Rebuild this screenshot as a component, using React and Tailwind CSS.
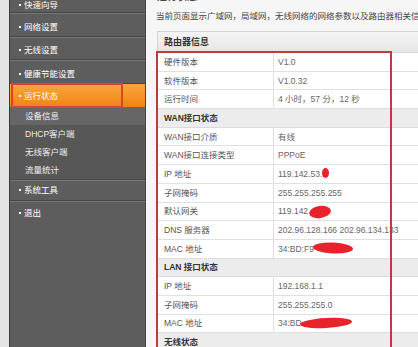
import React from "react";

const mainTop = ["快速向导", "网络设置", "无线设置", "健康节能设置"];
const subItems = ["设备信息", "DHCP客户端", "无线客户端", "流量统计"];

const rows = [
  { label: "硬件版本", value: "V1.0" },
  { label: "软件版本", value: "V1.0.32" },
  { label: "运行时间", value: "4 小时，57 分，12 秒" },
  { section: "WAN接口状态" },
  { label: "WAN接口介质", value: "有线" },
  { label: "WAN接口连接类型", value: "PPPoE" },
  { label: "IP 地址", value: "119.142.53." },
  { label: "子网掩码", value: "255.255.255.255" },
  { label: "默认网关", value: "119.142" },
  { label: "DNS 服务器", value: "202.96.128.166 202.96.134.133" },
  { label: "MAC 地址", value: "34:BD:F9" },
  { section: "LAN 接口状态" },
  { label: "IP 地址", value: "192.168.1.1" },
  { label: "子网掩码", value: "255.255.255.0" },
  { label: "MAC 地址", value: "34:BD" },
  { section: "无线状态" },
];

function Bullet() {
  return <span className="mr-[3px] inline-block h-[2px] w-[2px] shrink-0 bg-white" />;
}

export default function App() {
  return (
    <div className="relative flex h-[347px] w-[418px] overflow-hidden bg-white font-['Liberation_Sans','Noto_Sans_CJK_SC',sans-serif]">
      {/* left gutter */}
      <div className="w-[10px] shrink-0 border-r border-[#3c3c3c] bg-[#e4e4e4]" />

      {/* sidebar */}
      <div className="w-[136px] shrink-0 border-r border-[#444] bg-[#5d5d5d] text-[8.5px] leading-[12px] text-white">
        <div className="-mt-[10.5px]">
          {mainTop.map((l, i) => (
            <div
              key={l}
              className={`flex h-[23.5px] items-center border-b border-[#474747] pl-[9px] shadow-[inset_0_1px_0_#777] ${
                i === 0 ? "pt-[9px]" : "pt-[5px]"
              }`}
            >
              <Bullet />
              <span>{l}</span>
            </div>
          ))}
          <div className="flex h-[23.5px] items-center bg-gradient-to-b from-[#f9a640] via-[#f59526] to-[#ec8517] pl-[9px] pt-[2px]">
            <Bullet />
            <span>运行状态</span>
          </div>
          <div className="border-b border-[#474747] bg-[#575757] text-[#eeeeee]">
            {subItems.map((l, i) => (
              <div
                key={l}
                className={`flex h-[18px] items-center pl-[15px] ${i === 0 ? "bg-[#666666]" : ""}`}
              >
                {l}
              </div>
            ))}
          </div>
          <div className="flex h-[21px] items-center border-b border-[#474747] pl-[9px] shadow-[inset_0_1px_0_#777]">
            <Bullet />
            <span>系统工具</span>
          </div>
          <div className="flex h-[23px] items-center pl-[9px] shadow-[inset_0_1px_0_#777]">
            <Bullet />
            <span>退出</span>
          </div>
        </div>
      </div>

      {/* content */}
      <div className="min-w-0 flex-1 bg-[#f6f6f6] pl-[11px]">
        <div className="-mt-[10px] h-[14px] whitespace-nowrap text-[10px] font-bold leading-[14px] text-[#444]">
          运行状态
        </div>
        <div className="-ml-[1px] mt-[5px] h-[14px] whitespace-nowrap text-[8.5px] leading-[14px] text-[#444]">
          当前页面显示广域网，局域网，无线网络的网络参数以及路由器相关信息
        </div>
        <div className="mt-[8px] w-[300px] border-l border-t border-[#d2d2d2] bg-white text-[8.5px] leading-[12px]">
          <div className="flex h-[21px] items-center border-b border-[#d6d6d6] bg-gradient-to-b from-[#f5f5f5] to-[#e6e6e6] pl-[6px] text-[9px] font-bold text-[#333]">
            路由器信息
          </div>
          {rows.map((r, i) =>
            r.section ? (
              <div
                key={i}
                className="flex h-[18.7px] items-center border-b border-[#dcdcdc] bg-[#ececec] pl-[6px] font-bold text-[#333]"
              >
                {r.section}
              </div>
            ) : (
              <div key={i} className="flex h-[18.7px] border-b border-[#e0e0e0]">
                <div className="flex w-[116px] shrink-0 items-center border-r border-[#e0e0e0] pl-[6px] text-[#555]">
                  {r.label}
                </div>
                <div className="flex items-center whitespace-nowrap pl-[4px] text-[#666]">{r.value}</div>
              </div>
            )
          )}
        </div>
      </div>

      {/* annotation: red box around active menu item */}
      <div className="pointer-events-none absolute left-[11px] top-[83px] h-[25px] w-[112px] border-2 border-[#e0402c]" />
      {/* annotation: red box around table */}
      <div className="pointer-events-none absolute left-[156px] top-[51px] h-[320px] w-[236px] border-2 border-[#c03a3c]" />

      {/* red scribbles */}
      <svg className="pointer-events-none absolute left-0 top-0" width="418" height="347" viewBox="0 0 418 347">
        <g fill="#e8232b">
          <ellipse cx="325.5" cy="173" rx="3.5" ry="5" />
          <ellipse cx="320" cy="212" rx="11" ry="6" transform="rotate(-8 320 212)" />
          <ellipse cx="333" cy="248" rx="20" ry="5.5" transform="rotate(3 333 248)" />
          <ellipse cx="326" cy="323" rx="26" ry="5" transform="rotate(-3 326 323)" />
        </g>
      </svg>
    </div>
  );
}
